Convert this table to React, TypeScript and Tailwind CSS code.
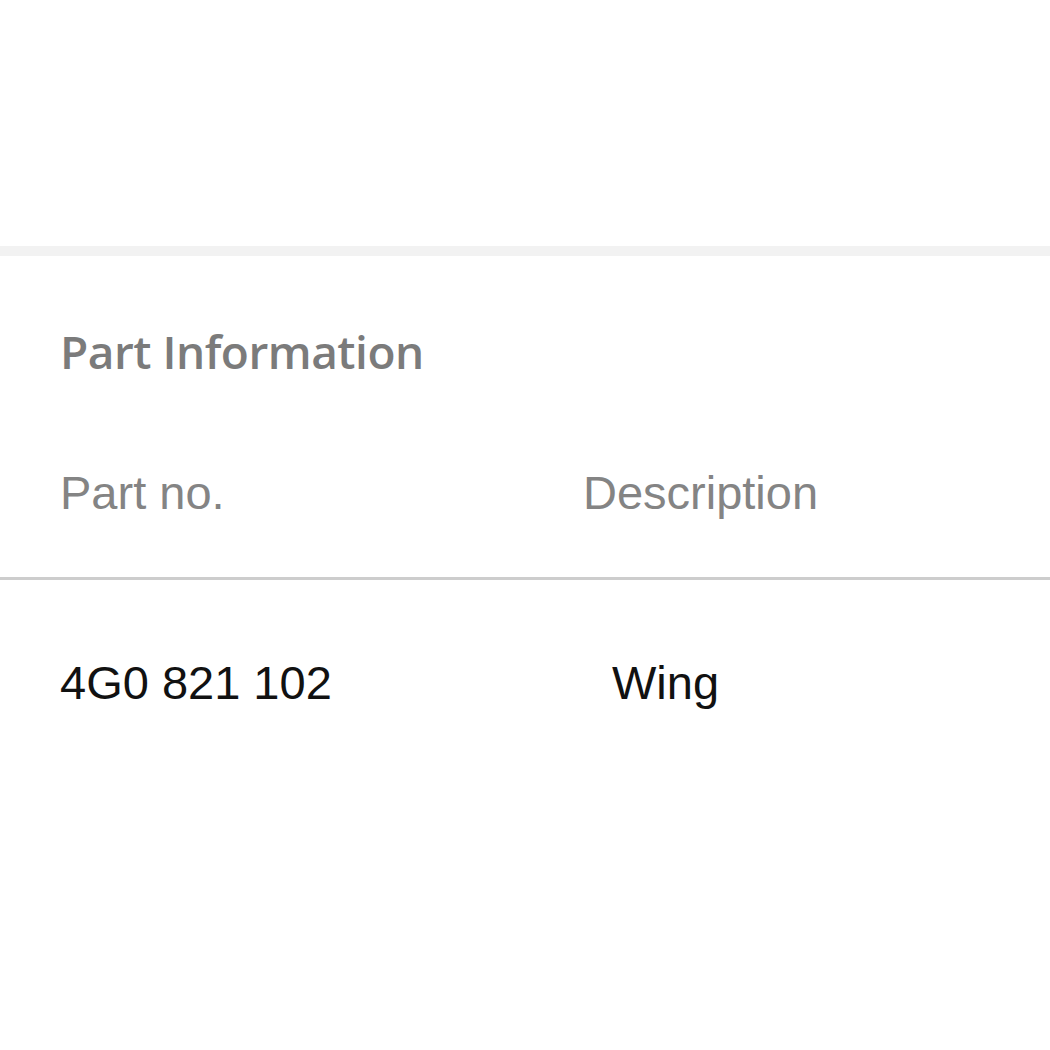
import React from "react";

const part = {
  number: "4G0 821 102",
  description: "Wing",
};

const App = () => {
  return (
    <div className="h-[1050px] w-[1050px] overflow-hidden bg-white font-['Liberation_Sans',Arial,sans-serif]">
      <div className="h-[246px]" />
      <div className="h-[10px] bg-[#f2f2f2]" />
      <div className="pt-[67px]">
        <h2 className="pl-[60px] font-['Open_Sans',sans-serif] text-[46px] leading-[56px] font-semibold tracking-[-0.5px] text-[#7b7b7b]">
          Part Information
        </h2>
        <div className="mt-[87px] grid grid-cols-[583px_1fr] pb-[57px] text-[47px] leading-[54px] text-[#848484]">
          <div className="pl-[60px]">Part no.</div>
          <div>Description</div>
        </div>
        <div className="h-[3px] bg-[#cdcdcd]" />
        <div className="mt-[76px] grid grid-cols-[583px_1fr] text-[47px] leading-[54px] text-[#111]">
          <div className="pl-[60px]">{part.number}</div>
          <div className="pl-[29px]">{part.description}</div>
        </div>
      </div>
    </div>
  );
};

export default App;
